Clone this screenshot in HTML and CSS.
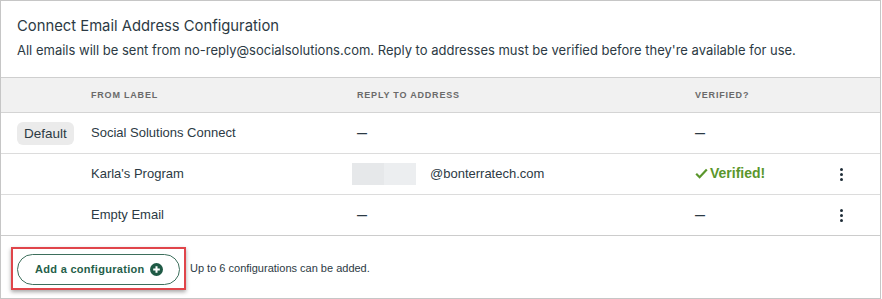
FILE: index.html
```html
<!DOCTYPE html>
<html>
<head>
<meta charset="utf-8">
<link rel="stylesheet" href="styles.css">
</head>
<body>
<div class="panel">
  <div class="intro">
    <h1 class="title">Connect Email Address Configuration</h1>
    <p class="subtitle">All emails will be sent from no-reply@socialsolutions.com. Reply to addresses must be verified before they're available for use.</p>
  </div>
  <div class="table">
    <div class="row head">
      <div class="c0"></div>
      <div class="c1">FROM LABEL</div>
      <div class="c2">REPLY TO ADDRESS</div>
      <div class="c3">VERIFIED?</div>
      <div class="c4"></div>
    </div>
    <div class="row">
      <div class="c0"><span class="badge">Default</span></div>
      <div class="c1">Social Solutions Connect</div>
      <div class="c2"><span class="dash">–</span></div>
      <div class="c3"><span class="dash">–</span></div>
      <div class="c4"></div>
    </div>
    <div class="row">
      <div class="c0"></div>
      <div class="c1">Karla's Program</div>
      <div class="c2 addr"><span class="mask"></span><span>@bonterratech.com</span></div>
      <div class="c3"><span class="verified"><svg width="13" height="11" viewBox="0 0 13 11"><path d="M1.2 5.8 L4.6 9.2 L11.8 1.6" fill="none" stroke="#5a962c" stroke-width="2.2"/></svg>Verified!</span></div>
      <div class="c4"><span class="kebab"><i></i><i></i><i></i></span></div>
    </div>
    <div class="row last">
      <div class="c0"></div>
      <div class="c1">Empty Email</div>
      <div class="c2"><span class="dash">–</span></div>
      <div class="c3"><span class="dash">–</span></div>
      <div class="c4"><span class="kebab"><i></i><i></i><i></i></span></div>
    </div>
  </div>
  <div class="footer">
    <div class="highlight">
      <button class="add">Add a configuration<svg width="13" height="13" viewBox="0 0 13 13"><circle cx="6.5" cy="6.5" r="6.5" fill="#1f5a45"/><path d="M6.5 3.2 V9.8 M3.2 6.5 H9.8" stroke="#fff" stroke-width="2"/></svg></button>
    </div>
    <span class="note">Up to 6 configurations can be added.</span>
  </div>
</div>
</body>
</html>
```
FILE: styles.css
```css
* { box-sizing: border-box; }
html, body { margin: 0; padding: 0; background: #fff; }
body { font-family: "Liberation Sans", Arial, sans-serif; color: #2c3a44; }

.panel {
  width: 881px;
  height: 299px;
  border: 1px solid #c6c6c6;
  display: flex;
  flex-direction: column;
}

.intro { padding: 15px 16px 0 16px; height: 76px; }
.title {
  margin: 0;
  font-family: Inter, "Open Sans", sans-serif;
  font-weight: 400;
  font-size: 14.8px;
  line-height: 20px;
  color: #2c3a44;
}
.subtitle {
  margin: 4px 0 0 0;
  font-family: Inter, "Open Sans", sans-serif;
  font-size: 13px;
  line-height: 20px;
  color: #2c3a44;
}

.table { border-top: 1px solid #cfcfcf; }
.row {
  display: flex;
  align-items: center;
  height: 41px;
  border-bottom: 1px solid #dcdcdc;
  font-size: 13px;
  line-height: 16px;
}
.row.head {
  height: 35px;
  background: #f1f1f1;
  border-bottom: 1px solid #d4d4d4;
  font-size: 9px;
  font-weight: 700;
  letter-spacing: 0.8px;
  color: #6a6a6a;
}
.row.last { border-bottom: 1px solid #cccccc; }
.c0 { width: 90px; padding-left: 16px; }
.c1 { width: 266px; }
.c2 { width: 338px; }
.c3 { width: 140px; }
.c4 { flex: 1; display: flex; }

.badge {
  display: inline-block;
  background: #ebebeb;
  border-radius: 6px;
  padding: 4px 7px;
  font-size: 13.5px;
  line-height: 15px;
  color: #2c3a44;
}
.dash { display: inline-block; color: #2c3a44; font-size: 18px; line-height: 16px; }
.addr { display: flex; align-items: center; gap: 14px; }
.mask { width: 64px; height: 22px; margin-left: -5px; background: linear-gradient(90deg, #e6e8ea 0 50%, #eceef0 50%); }
.verified {
  display: inline-flex;
  align-items: center;
  gap: 2px;
  color: #5a962c;
  font-weight: 700;
  font-size: 14px;
}
.kebab { display: flex; flex-direction: column; gap: 2px; margin-left: 5px; }
.kebab i { display: block; width: 3px; height: 3px; border-radius: 50%; background: #1f2d38; }

.footer {
  flex: 1;
  display: flex;
  align-items: center;
  gap: 4px;
  padding-left: 10px;
  padding-top: 2px;
}
.highlight {
  border: 2px solid #e0454a;
  padding: 5px 4px 3px 4px;
  box-shadow: 0 2px 4px rgba(0,0,0,0.35);
}
.add {
  display: flex;
  align-items: center;
  gap: 5px;
  width: 163px;
  height: 31px;
  padding: 0 0 0 17px;
  border: 1px solid #3d6f5c;
  border-radius: 16px;
  background: #fff;
  font-family: "Liberation Sans", Arial, sans-serif;
  font-weight: 700;
  font-size: 11px;
  letter-spacing: 0.3px;
  color: #256049;
}
.note { font-size: 11px; color: #2c3a44; }
```
